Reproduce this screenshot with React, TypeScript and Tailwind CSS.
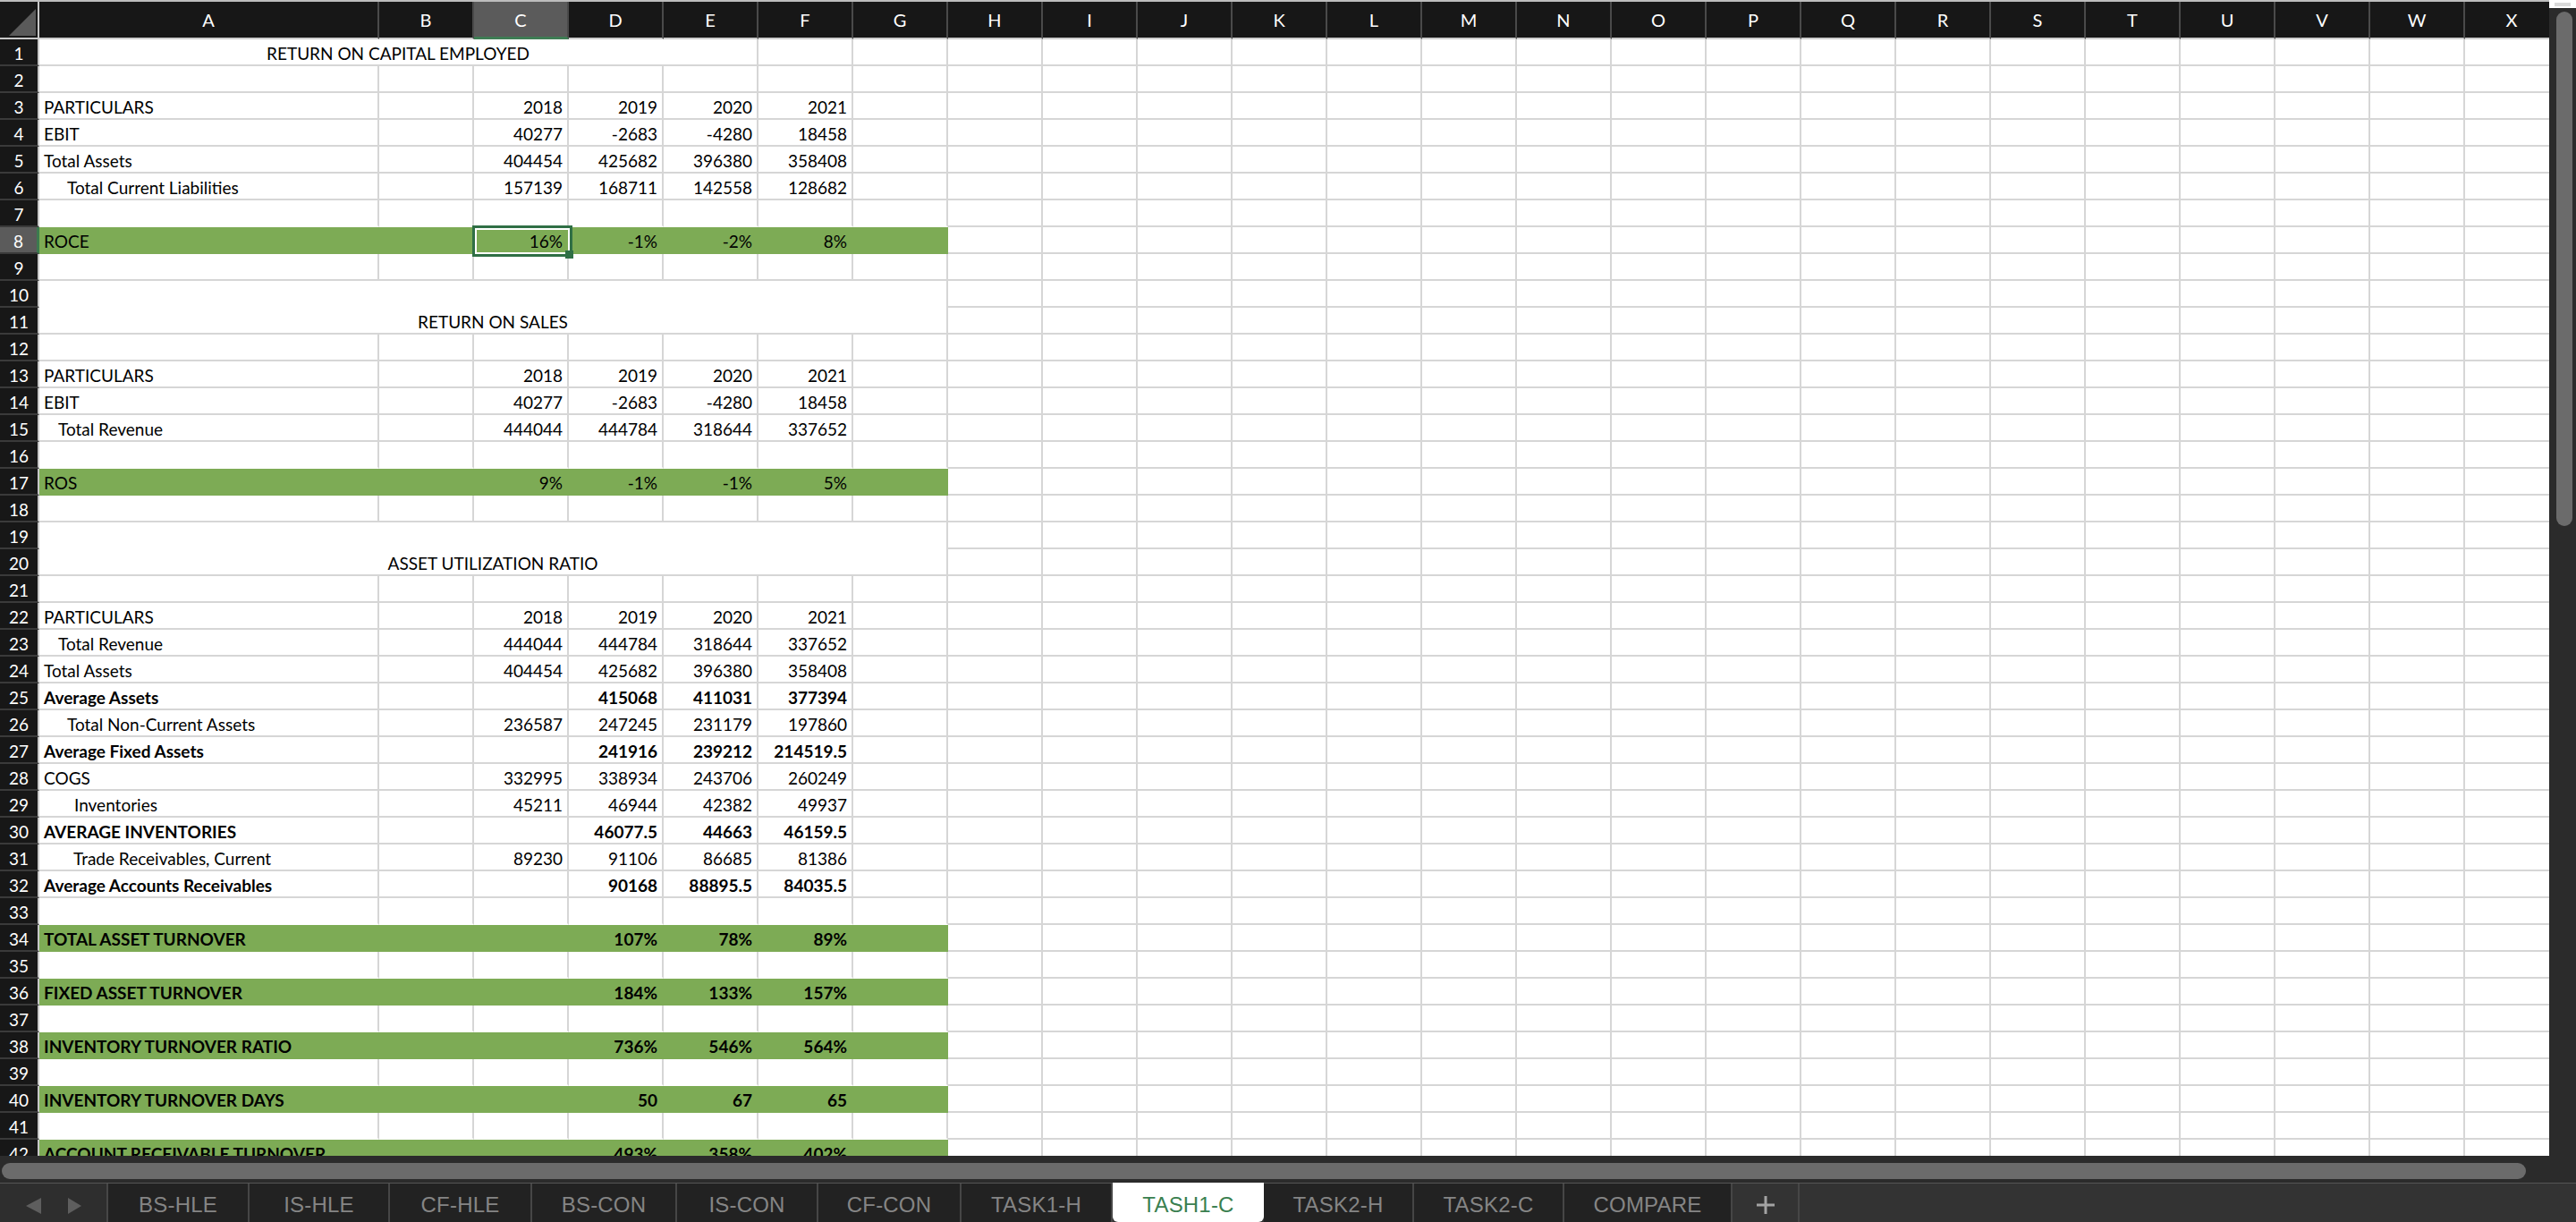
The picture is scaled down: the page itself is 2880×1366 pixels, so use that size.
import React from "react";

const LETTERS = "ABCDEFGHIJKLMNOPQRSTUVWX".split("");

type Row = {
  n: number;
  label?: string;
  pad?: string;
  bold?: boolean;
  vals?: string[]; // C, D, E, F
  green?: boolean;
  title?: string; // merged A-E on one row
  merge?: string; // merged A-G over two rows
};

const YEARS = ["2018", "2019", "2020", "2021"];

const ROWS: Row[] = [
  { n: 1, title: "RETURN ON CAPITAL EMPLOYED" },
  { n: 2 },
  { n: 3, label: "PARTICULARS", vals: YEARS },
  { n: 4, label: "EBIT", vals: ["40277", "-2683", "-4280", "18458"] },
  { n: 5, label: "Total Assets", vals: ["404454", "425682", "396380", "358408"] },
  { n: 6, label: "Total Current Liabilities", pad: "pl-[31px]", vals: ["157139", "168711", "142558", "128682"] },
  { n: 7 },
  { n: 8, label: "ROCE", green: true, vals: ["16%", "-1%", "-2%", "8%"] },
  { n: 9 },
  { n: 10, merge: "RETURN ON SALES" },
  { n: 12 },
  { n: 13, label: "PARTICULARS", vals: YEARS },
  { n: 14, label: "EBIT", vals: ["40277", "-2683", "-4280", "18458"] },
  { n: 15, label: "Total Revenue", pad: "pl-[21px]", vals: ["444044", "444784", "318644", "337652"] },
  { n: 16 },
  { n: 17, label: "ROS", green: true, vals: ["9%", "-1%", "-1%", "5%"] },
  { n: 18 },
  { n: 19, merge: "ASSET UTILIZATION RATIO" },
  { n: 21 },
  { n: 22, label: "PARTICULARS", vals: YEARS },
  { n: 23, label: "Total Revenue", pad: "pl-[21px]", vals: ["444044", "444784", "318644", "337652"] },
  { n: 24, label: "Total Assets", vals: ["404454", "425682", "396380", "358408"] },
  { n: 25, label: "Average Assets", bold: true, vals: ["", "415068", "411031", "377394"] },
  { n: 26, label: "Total Non-Current Assets", pad: "pl-[31px]", vals: ["236587", "247245", "231179", "197860"] },
  { n: 27, label: "Average Fixed Assets", bold: true, vals: ["", "241916", "239212", "214519.5"] },
  { n: 28, label: "COGS", vals: ["332995", "338934", "243706", "260249"] },
  { n: 29, label: "Inventories", pad: "pl-[39px]", vals: ["45211", "46944", "42382", "49937"] },
  { n: 30, label: "AVERAGE INVENTORIES", bold: true, vals: ["", "46077.5", "44663", "46159.5"] },
  { n: 31, label: "Trade Receivables, Current", pad: "pl-[38px]", vals: ["89230", "91106", "86685", "81386"] },
  { n: 32, label: "Average Accounts Receivables", bold: true, vals: ["", "90168", "88895.5", "84035.5"] },
  { n: 33 },
  { n: 34, label: "TOTAL ASSET TURNOVER", green: true, bold: true, vals: ["", "107%", "78%", "89%"] },
  { n: 35 },
  { n: 36, label: "FIXED ASSET TURNOVER", green: true, bold: true, vals: ["", "184%", "133%", "157%"] },
  { n: 37 },
  { n: 38, label: "INVENTORY TURNOVER RATIO", green: true, bold: true, vals: ["", "736%", "546%", "564%"] },
  { n: 39 },
  { n: 40, label: "INVENTORY TURNOVER DAYS", green: true, bold: true, vals: ["", "50", "67", "65"] },
  { n: 41 },
  { n: 42, label: "ACCOUNT RECEIVABLE TURNOVER", green: true, bold: true, vals: ["", "493%", "358%", "402%"] },
  { n: 43 },
];

const TABS = [
  { name: "BS-HLE", w: "w-[158px]" },
  { name: "IS-HLE", w: "w-[157px]" },
  { name: "CF-HLE", w: "w-[159px]" },
  { name: "BS-CON", w: "w-[162px]" },
  { name: "IS-CON", w: "w-[158px]" },
  { name: "CF-CON", w: "w-[160px]" },
  { name: "TASK1-H", w: "w-[169px]" },
  { name: "TASH1-C", w: "w-[169px]", active: true },
  { name: "TASK2-H", w: "w-[168px]" },
  { name: "TASK2-C", w: "w-[168px]" },
  { name: "COMPARE", w: "w-[188px]" },
];

const textCls = "pt-[6px] leading-[20px] text-[19px] whitespace-nowrap overflow-hidden";

function RowHead({ n }: { n: number }) {
  const active = n === 8;
  return (
    <div
      className={`w-[44px] h-[30px] shrink-0 flex justify-center text-white border-b-2 border-b-[#3a3a3a] ${textCls} ${
        active ? "bg-[#5b5b5b] border-r-[3px] border-r-[#3c7a4f]" : "bg-[#171717] border-r-2 border-r-[#c8c8c8]"
      }`}
    >
      {n}
    </div>
  );
}

function Cell({ i, children, right, pad, bold, noBottom }: {
  i: number;
  children?: React.ReactNode;
  right?: boolean;
  pad?: string;
  bold?: boolean;
  noBottom?: boolean;
}) {
  return (
    <div
      className={`h-[30px] shrink-0 border-r-2 border-b-2 border-r-[#d6d6d6] ${
        noBottom ? "border-b-white" : "border-b-[#d6d6d6]"
      } ${i === 0 ? "w-[380px]" : "w-[106px]"} ${textCls} ${right ? "text-right pr-[5px]" : pad ?? "pl-[5px]"} ${
        bold ? "font-bold" : ""
      } text-black`}
    >
      {children}
    </div>
  );
}

function SheetRow({ r, noBottom }: { r: Row; noBottom: boolean }) {
  if (r.merge) {
    return (
      <div className="flex h-[60px]">
        <div className="flex flex-col shrink-0">
          <RowHead n={r.n} />
          <RowHead n={r.n + 1} />
        </div>
        <div className="w-[1016px] h-[60px] shrink-0 border-r-2 border-b-2 border-[#d6d6d6] text-center text-black pt-[36px] leading-[20px] text-[19px]">
          {r.merge}
        </div>
        <div className="flex flex-col shrink-0">
          {[0, 1].map((k) => (
            <div key={k} className="flex">
              {LETTERS.slice(7).map((L, j) => (
                <Cell key={L} i={j + 7} />
              ))}
            </div>
          ))}
        </div>
      </div>
    );
  }

  if (r.title) {
    return (
      <div className="flex h-[30px]">
        <RowHead n={r.n} />
        <div className={`w-[804px] h-[30px] shrink-0 border-r-2 border-b-2 border-[#d6d6d6] text-center text-black ${textCls}`}>
          {r.title}
        </div>
        {LETTERS.slice(5).map((L, j) => (
          <Cell key={L} i={j + 5} />
        ))}
      </div>
    );
  }

  if (r.green) {
    return (
      <div className="flex h-[30px]">
        <RowHead n={r.n} />
        <div className={`flex w-[1016px] h-[30px] shrink-0 bg-[#7dab55] text-black ${r.bold ? "font-bold" : ""}`}>
          <div className={`w-[380px] shrink-0 pl-[5px] ${textCls}`}>{r.label}</div>
          {[0, 1, 2, 3, 4, 5].map((j) => (
            <div key={j} className={`w-[106px] shrink-0 text-right pr-[7px] ${textCls}`}>
              {j >= 1 && j <= 4 ? r.vals?.[j - 1] : ""}
            </div>
          ))}
        </div>
        {LETTERS.slice(7).map((L, j) => (
          <Cell key={L} i={j + 7} />
        ))}
      </div>
    );
  }

  return (
    <div className="flex h-[30px]">
      <RowHead n={r.n} />
      {LETTERS.map((L, i) => (
        <Cell
          key={L}
          i={i}
          right={i >= 2 && i <= 5}
          pad={r.pad}
          bold={r.bold}
          noBottom={noBottom && i <= 6}
        >
          {i === 0 ? r.label : i >= 2 && i <= 5 ? r.vals?.[i - 2] : null}
        </Cell>
      ))}
    </div>
  );
}

function Header() {
  return (
    <div className="flex h-[44px] border-t-2 border-[#bdbdbd] bg-[#171717]">
      <div className="w-[44px] h-[42px] shrink-0 border-r-2 border-b-2 border-[#c8c8c8] flex items-end justify-end pr-[2px] pb-[2px]">
        <svg width="30" height="30" viewBox="0 0 30 30">
          <polygon points="30,0 30,30 0,30" fill="#5a5a5a" />
        </svg>
      </div>
      {LETTERS.map((L, i) => (
        <div
          key={L}
          className={`h-[42px] shrink-0 flex items-center justify-center text-white text-[20px] border-r-2 border-r-[#4a4a4a] ${
            i === 0 ? "w-[380px]" : "w-[106px]"
          } ${i === 2 ? "bg-[#5b5b5b] border-b-[3px] border-b-[#3f7d54]" : "border-b-2 border-b-[#cdcdcd]"}`}
        >
          {L}
        </div>
      ))}
    </div>
  );
}

function Tabs() {
  return (
    <div className="h-[44px] flex bg-[#333333] border-t border-[#555555] font-['Liberation_Sans',Arial,sans-serif]">
      <div className="w-[121px] shrink-0 bg-[#2e2e2e] border-r-2 border-[#474747] flex items-center pt-[6px] pl-[29px] gap-[30px]">
        <svg width="17" height="18" viewBox="0 0 17 18">
          <polygon points="17,0 17,18 0,9" fill="#5e5e5e" />
        </svg>
        <svg width="15" height="18" viewBox="0 0 15 18">
          <polygon points="0,0 15,9 0,18" fill="#5e5e5e" />
        </svg>
      </div>
      {TABS.map((t) => (
        <div
          key={t.name}
          className={`${t.w} shrink-0 flex items-center justify-center pt-[5px] text-[24px] tracking-[0.2px] ${
            t.active
              ? "bg-white text-[#3a7f50] rounded-b-[6px] -mt-px"
              : "bg-[#222222] text-[#858585] border-r-2 border-[#464646]"
          }`}
        >
          {t.name}
        </div>
      ))}
      <div className="w-[75px] shrink-0 border-r-2 border-[#464646] flex items-center justify-center pt-[5px]">
        <svg width="22" height="22" viewBox="0 0 22 22">
          <path d="M11 1v20M1 11h20" stroke="#a3a3a3" strokeWidth="3" />
        </svg>
      </div>
    </div>
  );
}

export default function App() {
  return (
    <div className="w-[2880px] h-[1366px] overflow-hidden flex flex-col bg-[#333333] font-['Lato',sans-serif]">
      <div className="flex h-[1322px]">
        <div className="w-[2850px] shrink-0 flex flex-col">
          <div className="relative h-[1292px] overflow-hidden bg-white">
            <Header />
            {ROWS.map((r, idx) => (
              <SheetRow key={r.n} r={r} noBottom={!!ROWS[idx + 1]?.green} />
            ))}
            {/* selected cell C8 */}
            <div className="absolute left-[528px] top-[252px] w-[112px] h-[35px] border-[3px] border-[#2f6f45]">
              <div className="w-full h-full border-2 border-white" />
            </div>
            <div className="absolute left-[632px] top-[280px] w-[9px] h-[9px] bg-[#2f6f45]" />
          </div>
          <div className="h-[30px] bg-[#2b2b2b] pt-[8px] pl-[2px] pr-[26px]">
            <div className="h-[18px] rounded-full bg-[#6b6b6b]" />
          </div>
        </div>
        <div className="w-[30px] shrink-0 flex flex-col">
          <div className="h-[9px] bg-white flex items-center justify-center">
            <div className="w-[18px] h-[4px] bg-[#d9d9d9]" />
          </div>
          <div className="flex-1 bg-[#2b2b2b] pt-[4px] pl-[8px] pr-[4px]">
            <div className="h-[575px] rounded-full bg-[#6b6b6b]" />
          </div>
        </div>
      </div>
      <Tabs />
    </div>
  );
}
